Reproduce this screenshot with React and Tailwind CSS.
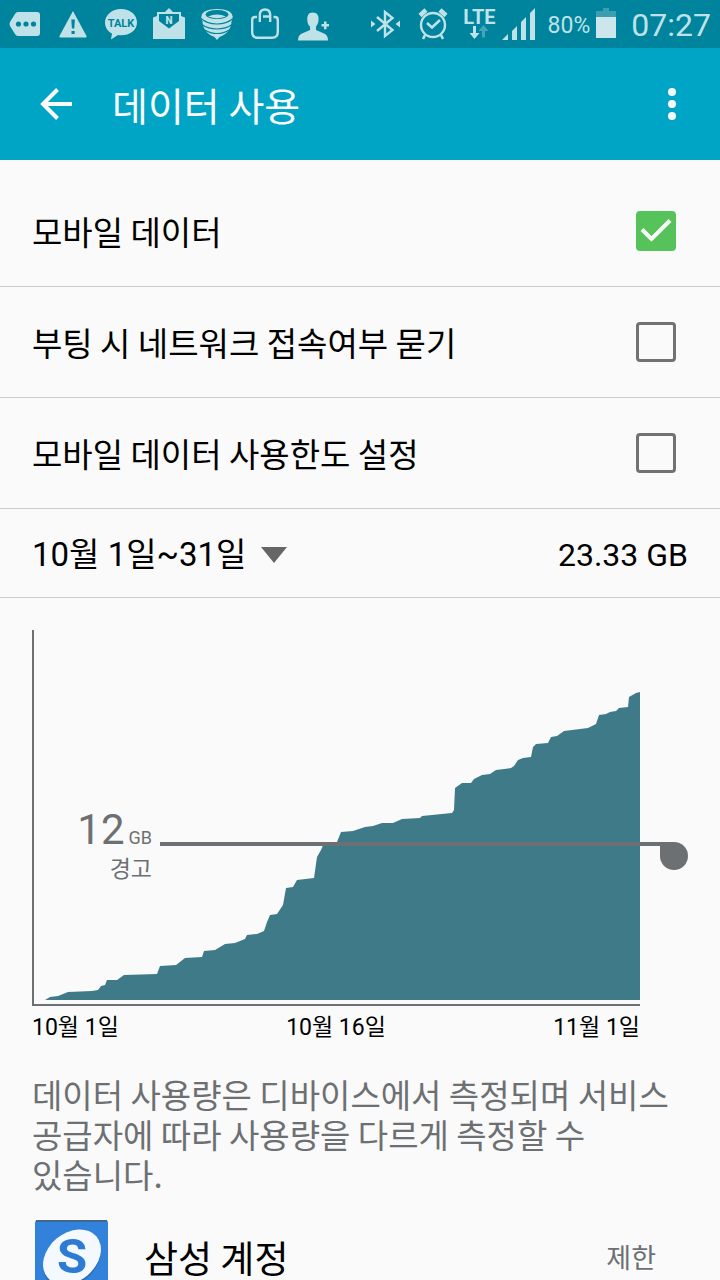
import React, { useState } from "react";

const usagePoints = [
  [45, 1000], [50, 997], [58, 996], [68, 992], [92, 991], [98, 990], [101, 986], [105, 985], [107, 980], [117, 980],
  [124, 975], [157, 974], [160, 966], [176, 965], [185, 958], [202, 957], [204, 951], [215, 950], [225, 944], [235, 943],
  [245, 939], [247, 935], [257, 934], [264, 931], [267, 922], [270, 915], [277, 914], [283, 905], [286, 888], [293, 887],
  [297, 880], [314, 878], [317, 857], [321, 850], [324, 843], [337, 842], [341, 832], [353, 831], [365, 827], [373, 826],
  [382, 823], [393, 823], [402, 819], [420, 818], [422, 816], [452, 813], [454, 810], [455, 788], [462, 783], [471, 783],
  [474, 779], [482, 775], [490, 774], [496, 770], [511, 768], [514, 766], [518, 760], [523, 758], [531, 757], [533, 747],
  [536, 744], [548, 743], [551, 737], [557, 736], [564, 731], [588, 728], [596, 724], [599, 715], [606, 714], [610, 712],
  [616, 711], [619, 708], [628, 707], [629, 697], [636, 693], [640, 692], [640, 1000],
];

const StatusBar = () => {
  return (
    <div className="h-12 shrink-0 bg-[#00839c] text-[#bfe2e8] pl-[9px] pr-[9px] flex items-center">
      <div className="flex items-center gap-4">
        {/* message tag */}
        <svg width="32" height="48" viewBox="0 0 32 48" fill="currentColor">
          <path d="M9 12h19q3 0 3 3v18q0 3-3 3H9q-2 0-3-2L1 26q-1-2 0-4l5-8q1-2 3-2z" />
          <g fill="#00839c"><circle cx="9.500" cy="24" r="2.600" /><circle cx="17" cy="24" r="2.600" /><circle cx="24.500" cy="24" r="2.600" /></g>
        </svg>
        {/* warning */}
        <svg width="32" height="48" viewBox="0 0 32 48" fill="currentColor">
          <path d="M16 11 29.500 36q.5 1.500-1 1.500h-25q-1.500 0-1-1.500z" />
          <path d="M14.300 19.500h3.600l-.6 9h-2.400zM14.500 31h3.200v3h-3.200z" fill="#00839c" />
        </svg>
        {/* talk bubble */}
        <svg width="32" height="48" viewBox="0 0 32 48" fill="currentColor">
          <path d="M16 9C7 9 0 15 0 22.500c0 5 3 9 7 11l-1 6 7-4.500q1.500.3 3 .3c9 0 16-5 16-12.800S25 9 16 9z" />
          <text x="16" y="26.500" textAnchor="middle" fontSize="11" fontWeight="700" fontFamily="Roboto, sans-serif" fill="#00839c">TALK</text>
        </svg>
        {/* mail */}
        <svg width="32" height="48" viewBox="0 0 32 48" fill="currentColor">
          <path d="M0 17.500 4 16v-4h8l4-4 4 4h8v4l4 1.500V39H0z" />
          <path d="M6 14h20v7l-10 7.500L6 21z" fill="#00839c" />
          <text x="16" y="23.500" textAnchor="middle" fontSize="10" fontWeight="900" fontFamily="Roboto, sans-serif">N</text>
        </svg>
        {/* spinning top */}
        <svg width="32" height="48" viewBox="0 0 32 48" fill="currentColor">
          <path d="M16 9C6 9 1 12 .5 16 0 18 .5 20 1.500 21c0 7 4 13 12 16l2.500 3 2.500-3c8-3 12-9 12-16 1-1 1.500-3 1-5C31 12 26 9 16 9z" />
          <g fill="none" stroke="#00839c">
            <ellipse cx="16" cy="14.500" rx="11.500" ry="4.500" fill="#00839c" stroke="none" />
            <path d="M7 16.500q9-4 18 0-9 3.500-18 0z" fill="#bfe2e8" stroke="none" />
            <path d="M0 18.500q6 5.500 16 5.500t16-5.500" strokeWidth="1.200" />
            <path d="M1 24.500q6 4.500 15 4.500t15-4.500" strokeWidth="1.200" />
            <path d="M4 30q5 3.500 12 3.500T28 30" strokeWidth="1.200" />
          </g>
        </svg>
        {/* app store bag */}
        <svg width="32" height="48" viewBox="0 0 32 48" fill="none" stroke="currentColor" strokeWidth="2.400">
          <path d="M8 17H6q-2.800 0-2.800 3v12q0 5.800 5.800 5.800h14q5.800 0 5.800-5.800V20q0-3-2.800-3h-1.500" />
          <path d="M10.800 22v-7q0-5.500 5.200-5.500t5.200 5.500v7M14 16.500h7" strokeWidth="2.400" />
        </svg>
        {/* add contact */}
        <svg width="32" height="48" viewBox="0 0 32 48" fill="currentColor">
          <path d="M15.500 12.500c5 0 6.500 3.500 6 8-.3 3-1.500 5-2.500 6v3.500l8 3.500q4 1.500 4 7H1q0-5.500 4-7l8-3.500v-3.500c-1.500-1-2.500-3-2.700-6-.4-4.500 1.200-8 5.200-8z" />
          <path d="M27 21.500h2.500V24H32v2.600h-2.500v2.600H27v-2.600h-2.500V24H27z" />
        </svg>
      </div>

      <div className="ml-auto flex items-center">
        {/* bluetooth */}
        <svg width="30" height="48" viewBox="0 0 30 48" fill="none" stroke="currentColor" strokeWidth="2.400">
          <path d="M6 17l15.500 13L14 36V12l7.500 6L6 31" />
          <path d="M0 20.500 4.500 24 0 27.500zM29 20.500 24.500 24l4.500 3.500z" fill="currentColor" stroke="none" />
        </svg>
        {/* alarm */}
        <svg className="ml-[17px]" width="30" height="48" viewBox="0 0 30 48" fill="none" stroke="currentColor">
          <circle cx="15" cy="25" r="12" strokeWidth="2.400" />
          <path d="M9 23l5 4.500 8-7.500" strokeWidth="2.600" />
          <path d="M2 15.500 8 10M28 15.500 22 10" strokeWidth="4.500" />
          <path d="M7 35l-2 4M23 35l2 4" strokeWidth="2.600" />
        </svg>
        {/* network */}
        <div className="ml-[15px] flex flex-col items-center">
          <span className="text-[20px] leading-4 font-bold">LTE</span>
          <svg width="20" height="14" viewBox="0 0 20 14">
            <path d="M4 1h3v7h3.500l-5 6-5-6H4z" fill="currentColor" />
            <path d="M13 12.500h3V6h3.500l-5-6-5 6H13z" fill="#45a5b8" />
          </svg>
        </div>
        <svg className="ml-[6px]" width="34" height="48" viewBox="0 0 34 48" fill="currentColor">
          <path d="M0 40l6-6v6zM10 31l5-5v14h-5zM19 22l5-5v23h-5zM28 13l5-5v32h-5z" />
        </svg>
        <span className="ml-3 pt-1 text-[23px] leading-[48px]">80%</span>
        <svg className="ml-[6px]" width="20" height="48" viewBox="0 0 20 48">
          <path d="M0 11h7V8h6v3h7v6H0z" fill="#3b9fb2" />
          <path d="M0 17h20v21H0z" fill="#cce6eb" />
        </svg>
        <span className="ml-[15px] pt-0.5 text-[32px] leading-[48px]">07:27</span>
      </div>
    </div>
  );
};

const CheckRow = ({ label, checked, onChange }) => {
  return (
    <label className="h-[111px] border-b border-[#cccccc] pl-8 pr-11 flex items-center justify-between">
      <span className="font-['Noto_Sans_CJK_KR',sans-serif] text-[33px] leading-10">{label}</span>
      <span className="relative size-10">
        <input type="checkbox" checked={checked} onChange={onChange} className="block size-10 appearance-none rounded border-3 border-[#727272] checked:border-[#55c25a] checked:bg-[#55c25a]" />
        {checked && (
          <svg className="absolute inset-0 pointer-events-none" width="40" height="40" viewBox="0 0 40 40" fill="none" stroke="#fafafa" strokeWidth="4">
            <path d="M6 18.500 15.500 28 34 9.500" />
          </svg>
        )}
      </span>
    </label>
  );
};

const UsageChart = () => {
  return (
    <div className="px-8 pt-8">
      <div className="relative">
        <div className="mr-12 h-[376px] border-l-2 border-b-2 border-[#6d7073]">
          <svg className="block w-full h-full" viewBox="34 630 606 374" preserveAspectRatio="none">
            <polygon points={usagePoints.map((p) => p.join(",")).join(" ")} fill="#3f7a89" />
          </svg>
        </div>
        {/* warning limit */}
        <div className="absolute left-0 right-0 top-[180px] flex items-start text-[#6d7073]">
          <div className="w-[120px]">
            <p className="flex items-baseline justify-end gap-1 leading-10">
              <span className="text-[42px]">12</span>
              <span className="text-[18px]">GB</span>
            </p>
            <p className="text-right text-[23px] leading-6">경고</p>
          </div>
          <div className="ml-2 mt-8 h-1 grow bg-[#6d7073]" />
          <div className="mt-8 size-7 rounded-full rounded-tl-none bg-[#6d7073]" />
        </div>
      </div>
      <div className="mr-12 pt-1 flex justify-between text-[23px] leading-9">
        <span>10월 1일</span>
        <span>10월 16일</span>
        <span>11월 1일</span>
      </div>
    </div>
  );
};

const App = () => {
  const [mobileData, setMobileData] = useState(true);
  const [askOnBoot, setAskOnBoot] = useState(false);
  const [limit, setLimit] = useState(false);

  return (
    <div className="h-screen overflow-hidden flex flex-col bg-[#fafafa] text-black font-[Roboto,'Noto_Sans_CJK_KR',sans-serif]">
      <StatusBar />

      <header className="h-28 shrink-0 bg-[#00a5c5] text-[#fafafa] pl-10 pr-9 flex items-center">
        <button aria-label="뒤로">
          <svg width="32" height="32" viewBox="0 0 32 32" fill="none" stroke="currentColor" strokeWidth="4">
            <path d="M17.500 1.500 3 16l14.500 14.500M3 16h29" />
          </svg>
        </button>
        <h1 className="ml-10 font-['Noto_Sans_CJK_KR',sans-serif] text-[39px] leading-[48px]">데이터 사용</h1>
        <button aria-label="메뉴" className="ml-auto">
          <svg width="24" height="32" viewBox="0 0 24 32" fill="currentColor">
            <circle cx="12" cy="4" r="4" />
            <circle cx="12" cy="16" r="4" />
            <circle cx="12" cy="28" r="4" />
          </svg>
        </button>
      </header>

      <main className="pt-4 grow overflow-hidden">
        <CheckRow label="모바일 데이터" checked={mobileData} onChange={() => setMobileData(!mobileData)} />
        <CheckRow label="부팅 시 네트워크 접속여부 묻기" checked={askOnBoot} onChange={() => setAskOnBoot(!askOnBoot)} />
        <CheckRow label="모바일 데이터 사용한도 설정" checked={limit} onChange={() => setLimit(!limit)} />

        <div className="h-[89px] border-b border-[#cccccc] px-8 pt-1 flex items-center justify-between">
          <div className="relative flex items-center">
            <select aria-label="기간" className="appearance-none bg-transparent pr-10 text-[33px] leading-10">
              <option>10월 1일~31일</option>
            </select>
            <svg className="absolute right-0 pointer-events-none" width="26" height="16" viewBox="0 0 26 16" fill="#666666">
              <path d="M0 0h26L13 16z" />
            </svg>
          </div>
          <span className="text-[32px] leading-10">23.33 GB</span>
        </div>

        <UsageChart />

        <p className="px-8 pt-7 font-['Noto_Sans_CJK_KR',sans-serif] text-[33px] leading-10 break-keep text-[#6d7073]">
          데이터 사용량은 디바이스에서 측정되며 서비스 공급자에 따라 사용량을 다르게 측정할 수 있습니다.
        </p>

        <div className="mt-[26px] pl-[35px] pr-16 flex items-center font-['Noto_Sans_CJK_KR',sans-serif]">
          <svg width="73" height="73" viewBox="0 0 73 73">
            <rect width="73" height="73" rx="3" fill="#3282dc" />
            <path d="M1 1h71" stroke="#40688f" strokeWidth="2" />
            <ellipse cx="37" cy="39" rx="32" ry="24" transform="rotate(-40 37 39)" fill="#2468b5" />
            <ellipse cx="37" cy="37" rx="32" ry="24" transform="rotate(-40 37 37)" fill="#f3f9ff" />
            <text x="37" y="53" textAnchor="middle" fontSize="49" fontWeight="700" fontFamily="Roboto, sans-serif" fill="#2d7bd4">S</text>
          </svg>
          <span className="ml-9 text-[37px] leading-[48px]">삼성 계정</span>
          <span className="ml-auto text-[27px] leading-[48px] text-[#6d7073]">제한</span>
        </div>
      </main>
    </div>
  );
};

export default App;
